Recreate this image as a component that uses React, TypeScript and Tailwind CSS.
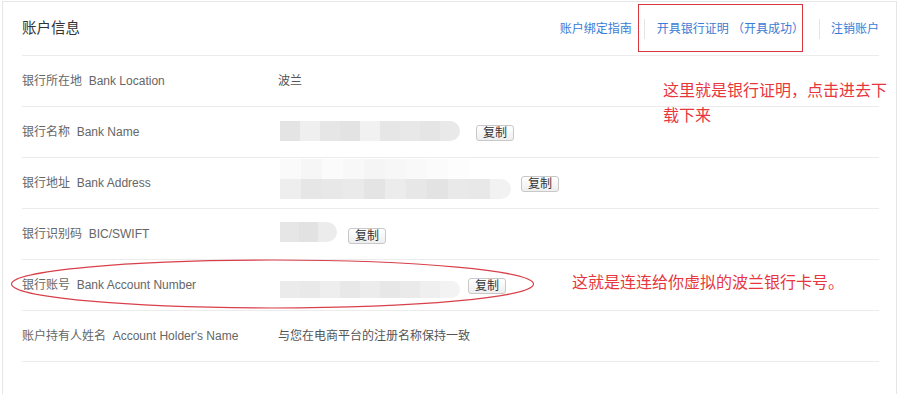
import React from 'react';

const FONT = '[font-family:"Liberation_Sans","Noto_Sans_CJK_SC",sans-serif]';

// pixelated blur blocks that hide the sensitive values
const Mosaic: React.FC<{ cells: string[]; cell?: number; height: number; faint?: string[] }> = ({ cells, cell = 20, height, faint }) => (
  <div className="flex flex-col ml-[2px]">
    {faint && (
      <div className="flex">
        {faint.map((c, i) => (
          <div key={i} style={{ width: cell, height: 20, background: c }} />
        ))}
      </div>
    )}
    <div className="flex rounded-r-full overflow-hidden blur-[0.6px]">
      {cells.map((c, i) => (
        <div key={i} style={{ width: cell, height, background: c }} />
      ))}
    </div>
  </div>
);

const CopyButton: React.FC<{ className?: string }> = ({ className = '' }) => (
  <button
    className={`h-[16px] px-[6px] text-[12px] leading-[14px] text-[#333] border border-[#c8c8c8] rounded-[3px] bg-gradient-to-b from-white to-[#eeeeee] ${className}`}
  >
    复制
  </button>
);

const Row: React.FC<{ cn: string; en: string; children?: React.ReactNode }> = ({ cn, en, children }) => (
  <div className="flex items-center h-[51px] border-b border-[#ececec] text-[12px] text-[#666]">
    <div className="w-[256px] shrink-0 whitespace-pre">
      {cn}
      {'  '}
      {en}
    </div>
    <div className="flex items-center">{children}</div>
  </div>
);

const App: React.FC = () => {
  const links = ['账户绑定指南', '开具银行证明 （开具成功）', '注销账户'];

  return (
    <div className={`relative w-[899px] h-[394px] overflow-hidden bg-white ${FONT}`}>
      <div className="mt-px mx-[2px] h-[400px] border border-[#e6e6e6] pl-[19px] pr-[17px]">
        {/* Header */}
        <div className="flex items-center justify-between h-[54px] border-b border-[#ececec]">
          <h1 className="text-[14.5px] text-[#333]">账户信息</h1>
          <div className="flex items-center text-[12px] text-[#3a7bd5] whitespace-pre">
            {links.map((l, i) => (
              <React.Fragment key={l}>
                {i > 0 && <span className={`w-px h-[20px] bg-[#e4e4e4] ${i === 1 ? 'mx-[12px]' : 'ml-[15px] mr-[11px]'}`} />}
                <a className="cursor-pointer">{l}</a>
              </React.Fragment>
            ))}
          </div>
        </div>

        <Row cn="银行所在地" en="Bank Location">
          <span className="text-[#555]">波兰</span>
        </Row>
        <Row cn="银行名称" en="Bank Name">
          <div className="mt-[-2px]">
            <Mosaic
              height={20}
              cells={['#e4e4e4', '#efefef', '#e6e6e6', '#e3e3e3', '#f1f1f1', '#e6e6e6', '#e8e8e8', '#e5e5e5', '#e9e9e9']}
            />
          </div>
          <CopyButton className="ml-[16px] mt-[2px]" />
        </Row>
        <Row cn="银行地址" en="Bank Address">
          <div className="mt-[-8px]">
            <Mosaic
              height={20}
              cell={21}
              faint={['#fafafa', '#f6f6f6', '#fbfbfb', '#f8f8f8', '#f5f5f5', '#f7f7f7', '#f9f9f9', '#fbfbfb', '#fdfdfd', '#ffffff', '#ffffff']}
              cells={['#eeeeee', '#e6e6e6', '#e8e8e8', '#eaeaea', '#e4e4e4', '#ececec', '#e7e7e7', '#e3e3e3', '#e9e9e9', '#e8e8e8', '#f2f2f2']}
            />
          </div>
          <CopyButton className="ml-[10px] mt-[2px]" />
        </Row>
        <Row cn="银行识别码" en="BIC/SWIFT">
          <div className="mt-[-4px]">
            <Mosaic height={20} cell={19} cells={['#e6e6e6', '#e2e2e2', '#ececec']} />
          </div>
          <CopyButton className="ml-[11px] mt-[4px]" />
        </Row>
        <Row cn="银行账号" en="Bank Account Number">
          <div className="mt-[8px]">
            <Mosaic
              height={17}
              cells={['#ebebeb', '#e9e9e9', '#eeeeee', '#e8e8e8', '#ececec', '#e7e7e7', '#eaeaea', '#efefef', '#f3f3f3']}
            />
          </div>
          <CopyButton className="ml-[8px] mt-[2px]" />
        </Row>
        <Row cn="账户持有人姓名" en="Account Holder's Name">
          <span className="text-[#555]">与您在电商平台的注册名称保持一致</span>
        </Row>
      </div>

      {/* Annotations drawn over the page */}
      <div className="absolute left-[638px] top-[4px] w-[165px] h-[48px] border border-[#d9353c]" />
      <div className="absolute left-[663px] top-[78px] w-[230px] text-[16px] leading-[25px] text-[#e8363d]">
        这里就是银行证明，点击进去下载下来
      </div>
      <svg className="absolute left-0 top-0 pointer-events-none" width="899" height="394">
        <ellipse cx="272.5" cy="284" rx="261" ry="24" fill="none" stroke="#d9404a" strokeWidth="1.2" />
      </svg>
      <div className="absolute left-[572px] top-[272px] text-[16px] leading-[22px] text-[#e8363d]">
        这就是连连给你虚拟的波兰银行卡号。
      </div>
    </div>
  );
};

export default App;
